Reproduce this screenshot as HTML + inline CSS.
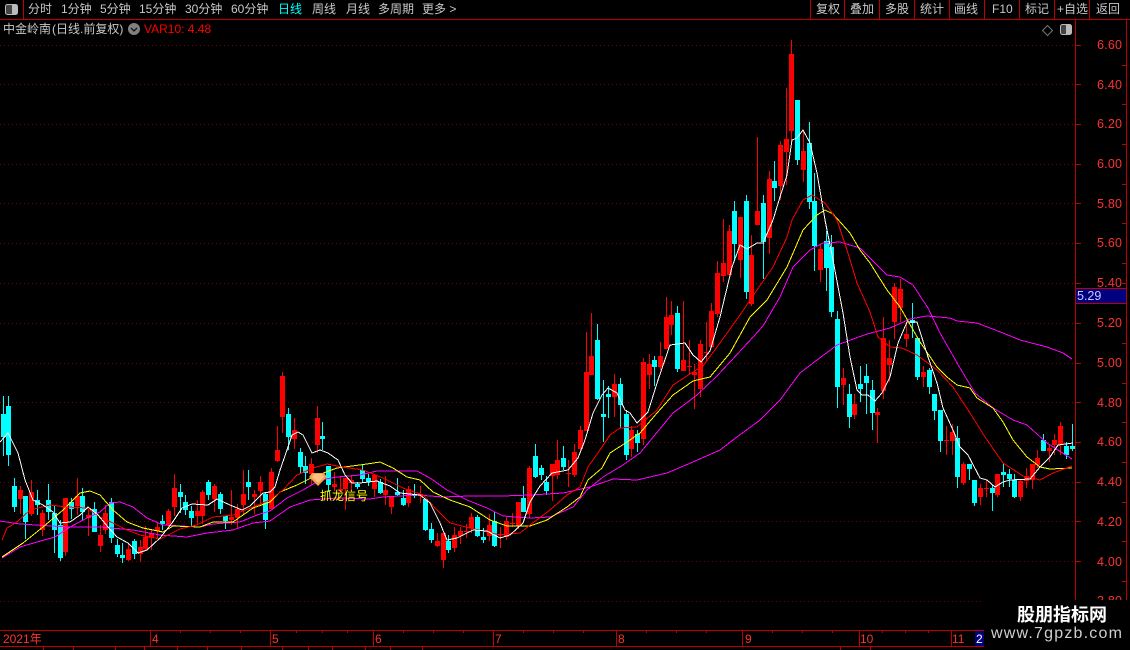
<!DOCTYPE html>
<html lang="zh"><head><meta charset="utf-8"><title>中金岭南</title>
<style>
html,body{margin:0;padding:0;background:#000;width:1130px;height:650px;overflow:hidden}
#p{position:relative;width:1130px;height:650px;background:#000;overflow:hidden;font:12px "WenQuanYi Zen Hei","Liberation Sans",sans-serif;color:#c8c8c8}
#p span{position:absolute;white-space:nowrap;line-height:14px}
.t{top:2px}
.a{left:1097px;color:#ff3232;font-family:"Liberation Sans",sans-serif;font-size:12.5px;letter-spacing:.2px}
.m{top:632px;color:#ff3232}
</style></head><body><div id="p">
<svg width="1130" height="650" style="position:absolute;left:0;top:0">
<g stroke="#7a0000" stroke-width="1" stroke-dasharray="1 3" shape-rendering="crispEdges">
<path d="M0 45.500H1073M0 84.500H1073M0 124.500H1073M0 164.500H1073M0 203.500H1073M0 243.500H1073M0 283.500H1073M0 323.500H1073M0 363.500H1073M0 402.500H1073M0 442.500H1073M0 482.500H1073M0 521.500H1073M0 561.500H1073M0 601.500H1073"/>
</g>
<g transform="translate(.5 0)" shape-rendering="crispEdges" fill="none">
<path stroke="#f00" stroke-width="1" d="M20 486V514M31 480V516M42 510V536M65 498V556M77 478V515M88 510V536M100 525V552M105 505V534M128 543V561M140 540V562M145 526V550M151 530V550M157 522V539M168 509V529M174 474V516M197 500V524M202 490V524M214 484V512M231 490V525M237 504V529M243 470V514M254 490V514M260 476V504M271 468V509M277 426V462M282 372V433M294 418V449M311 458V485M317 406V453M334 472V491M340 476V492M345 478V510M351 475V491M374 474V497M385 476V505M391 496V514M408 486V507M420 486V503M437 533V547M443 533V568M454 527V552M460 527V544M466 524V538M471 513V533M489 514V541M500 527V548M506 517V540M512 513V527M518 502V529M529 466V518M552 464V501M557 440V479M568 460V487M574 444V477M580 426V452M586 332V431M591 313V375M614 374V417M631 426V457M643 358V445M649 354V389M660 342V370M666 297V349M671 301V335M683 301V371M689 340V375M694 364V409M700 340V397M706 322V362M711 303V348M717 261V317M723 219V282M729 225V275M740 217V278M751 235V306M757 137V225M769 171V254M780 141V200M786 88V185M791 40V141M803 130V182M820 245V282M843 368V405M854 394V419M877 408V443M883 317V399M889 340V382M894 283V339M900 279V322M906 322V347M923 366V387M946 426V455M952 424V455M963 462V485M980 484V505M986 480V497M997 474V497M1020 479V501M1026 468V488M1032 464V489M1037 450V468M1049 445V462M1054 434V455M1060 422V455"/>
<path stroke="#f00" stroke-width="5" d="M20 490V499M31 492V514M42 513V530M65 498V552M77 496V506M88 515V518M100 535V546M105 513V530M128 549V560M140 547V554M145 537V549M151 533V538M157 527V531M168 511V525M174 488V507M197 511V516M202 492V516M214 486V499M231 517V520M237 509V518M243 494V505M254 494V497M260 482V491M271 472V509M277 450V461M282 376V417M294 430V439M311 464V474M317 418V445M334 484V487M340 489V491M345 478V489M351 480V483M374 475V489M385 490V495M391 496V507M408 489V503M420 494V496M437 541V546M443 533V560M454 535V548M460 531V536M466 531V532M471 517V528M489 525V536M500 534V535M506 521V537M512 523V524M518 502V526M529 468V514M552 464V476M557 460V475M568 473V474M574 452V475M580 430V449M586 372V431M591 356V375M614 384V397M631 430V449M643 362V439M649 364V375M660 356V367M666 317V349M671 315V325M683 360V371M689 366V367M694 372V375M700 344V389M706 352V353M711 311V347M717 273V314M723 263V276M729 231V275M740 217V260M751 255V304M757 211V225M769 179V238M780 145V186M786 139V152M791 54V131M803 151V170M820 249V270M843 378V385M854 404V415M877 412V415M883 338V391M889 358V365M894 287V322M900 289V308M906 334V339M923 372V377M946 440V441M952 432V441M963 464V483M980 488V497M986 488V489M997 474V495M1020 481V497M1026 476V481M1032 464V480M1037 458V465M1049 448V451M1054 440V445M1060 426V445"/>
<path stroke="#0ff" stroke-width="1" d="M3 396V456M8 396V466M14 478V512M25 496V539M37 490V515M48 484V520M54 506V553M60 520V561M71 498V519M82 488V521M94 502V532M111 498V543M117 539V557M122 543V563M134 539V559M162 515V530M180 484V513M185 495V515M191 506V526M208 480V500M220 492V514M225 516V529M248 470V500M265 492V529M288 408V450M300 448V474M305 456V484M322 422V450M328 466V492M357 482V489M362 464V483M368 474V486M380 479V494M397 478V496M403 490V506M414 484V498M425 499V531M431 523V543M448 535V553M477 515V537M483 528V543M494 512V547M523 486V512M535 444V478M541 465V480M546 476V495M563 446V470M597 324V400M603 380V442M608 386V418M620 378V428M626 410V460M637 430V452M654 356V386M677 306V372M734 201V261M746 195V299M763 195V279M774 161V201M797 100V165M809 122V209M814 173V271M826 231V291M831 235V317M837 311V408M849 384V428M860 366V402M866 364V414M872 380V430M912 303V338M917 338V380M929 368V394M934 394V420M940 410V452M957 426V488M969 464V480M974 480V506M992 485V511M1003 464V487M1009 469V487M1014 474V498M1043 434V451M1066 442V459M1072 424V451"/>
<path stroke="#0ff" stroke-width="5" d="M3 414V437M8 406V455M14 486V507M25 496V522M37 500V505M48 500V512M54 513V530M60 525V558M71 502V509M82 496V512M94 509V532M111 502V538M117 545V554M122 555V558M134 541V554M162 521V524M180 492V497M185 502V510M191 511V518M208 482V495M220 494V509M225 516V521M248 482V487M265 494V520M288 414V437M300 452V467M305 466V473M322 436V439M328 466V485M357 484V487M362 470V479M368 478V482M380 482V493M397 492V495M403 498V505M414 494V496M425 499V530M431 529V540M448 541V550M477 517V536M483 537V540M494 521V546M523 498V512M535 456V477M541 468V475M546 482V491M563 458V467M597 340V399M603 414V417M608 394V397M620 384V405M626 414V455M637 434V443M654 360V367M677 313V369M734 211V244M746 201V292M763 203V242M774 181V188M797 100V160M809 143V202M814 201V246M826 241V268M831 247V312M837 319V387M849 394V417M860 384V389M866 376V383M872 390V413M912 320V323M917 338V377M929 370V387M934 394V411M940 410V441M957 438V477M969 464V469M974 480V503M992 488V493M1003 472V475M1009 474V479M1014 480V497M1043 440V451M1066 446V455M1072 446V449"/>
</g>
<g fill="none" stroke-width="1" shape-rendering="crispEdges">
<polyline stroke="#f0f" points="0,521 20,524 67,527 100,527 133,530 160,535 187,537 207,533 233,530 253,523 270,521 290,507 310,500 337,498 370,499 383,497 417,495 443,497 470,496 503,496 530,495 563,493 590,487 613,479 637,480 667,473 693,462 720,450 733,440 760,420 780,400 800,373 817,360 837,345 867,334 890,328 910,319 927,316 950,318 957,321 977,323 1003,333 1020,340 1047,347 1063,353 1072,359"/>
<polyline stroke="#f0f" points="2,558 20,547 37,542 55,537 70,527 87,518 100,512 110,503 120,502 133,507 147,518 163,525 180,526 200,527 213,524 240,522 257,515 270,511 287,498 303,490 320,480 337,477 360,475 377,471 417,471 430,478 447,490 467,500 487,508 503,516 530,518 550,517 573,507 587,490 603,477 623,465 640,453 673,413 697,395 717,376 743,348 763,326 780,297 793,267 810,250 823,243 840,242 860,248 877,265 887,275 900,277 913,285 928,308 940,333 960,368 975,393 993,408 1013,420 1027,425 1047,443 1072,459"/>
<polyline stroke="#ff0" points="2,557 23,543 43,527 63,510 80,493 90,491 100,495 113,510 127,522 143,528 163,532 173,526 200,527 213,522 233,522 253,508 270,502 280,492 297,485 313,477 337,468 367,464 380,462 393,468 407,477 420,480 433,492 450,500 470,507 490,520 507,526 530,526 547,520 567,507 580,497 588,480 602,468 610,453 627,442 640,433 657,413 673,395 693,381 710,377 730,353 750,317 767,300 787,267 803,230 817,215 825,210 833,214 850,233 860,250 870,263 887,290 900,307 920,342 937,367 947,377 957,385 970,388 977,398 993,408 1003,422 1013,440 1027,457 1040,467 1050,469 1072,468"/>
<polyline stroke="#f00" points="2,540 7,528 17,522 30,510 50,505 67,507 87,508 100,517 113,523 127,530 140,535 160,539 180,529 197,525 213,517 233,515 253,507 270,500 283,490 297,475 313,468 327,464 342,467 363,470 383,478 403,488 423,495 437,510 450,523 470,528 500,535 520,533 530,525 550,510 567,495 580,487 588,467 600,450 610,435 620,428 637,427 657,410 673,385 690,374 703,366 720,343 740,315 757,290 773,267 787,237 792,220 803,200 812,195 825,203 837,220 847,250 857,283 870,312 878,337 890,347 902,348 917,355 937,370 953,387 970,413 985,437 1003,463 1023,476 1040,480 1053,473 1072,466"/>
<polyline stroke="#fff" points="0,442 8,433 18,453 25,480 33,500 43,505 53,512 60,523 70,522 80,515 88,507 98,515 108,527 117,537 128,543 138,553 147,550 160,538 172,523 182,508 192,504 208,505 217,499 230,505 242,510 250,506 263,493 270,492 275,487 280,470 287,450 292,435 298,432 303,435 312,453 320,450 328,453 338,460 345,475 352,483 360,483 377,481 390,486 400,493 420,495 430,503 440,523 447,540 457,538 473,530 487,531 500,538 510,535 523,523 530,502 540,486 552,473 568,470 578,458 585,440 593,413 602,395 608,388 617,393 625,410 630,413 637,423 648,412 658,380 670,345 685,343 693,355 701,362 710,351 720,317 732,267 740,245 747,249 757,243 763,243 773,220 780,197 787,175 792,140 797,138 803,130 810,143 817,173 825,220 833,260 843,313 850,357 857,390 862,395 868,395 875,401 882,393 890,377 898,343 907,322 917,322 928,357 937,383 943,408 953,430 960,447 968,455 980,478 987,480 995,487 1003,482 1010,480 1030,479 1040,467 1050,457 1058,445 1073,443"/>
</g>
<polygon points="312,473 324,473 327,477 318,486 309,477" fill="#f0a050"/>
<polygon points="314,474 322,474 324,477 318,483 312,477" fill="#ffc080"/>
<g stroke="#c00000" stroke-width="1" fill="none" shape-rendering="crispEdges">
<path d="M0 19.500H1130M23.500 0V19M810.500 0V19M844.500 0V19M879.500 0V19M914.500 0V19M949.500 0V19M984.500 0V19M1019.500 0V19M1054.500 0V19M1089.500 0V19"/>
<path d="M1075.500 19V630M1126.500 19V630"/>
<path d="M1075 45.500h6M1075 84.500h6M1075 124.500h6M1075 164.500h6M1075 203.500h6M1075 243.500h6M1075 283.500h6M1075 323.500h6M1075 363.500h6M1075 402.500h6M1075 442.500h6M1075 482.500h6M1075 521.500h6M1075 561.500h6"/>
<path d="M1122 65.500h4M1122 104.500h4M1122 144.500h4M1122 184.500h4M1122 223.500h4M1122 263.500h4M1122 283.500h4M1122 343.500h4M1122 383.500h4M1122 422.500h4M1122 462.500h4M1122 502.500h4M1122 541.500h4M1122 581.500h4"/>
<path d="M0 630.500H1130M0 646.500H1130"/>
<path d="M150.500 630V646M270.500 630V646M373.500 630V646M493.500 630V646M616.500 630V646M742.500 630V646M859.500 630V646M951.500 630V646"/>
<path d="M180.500 630v3M210.500 630v3M240.500 630v3M296.500 630v3M322.500 630v3M347.500 630v3M403.500 630v3M433.500 630v3M463.500 630v3M523.500 630v3M553.500 630v3M583.500 630v3M646.500 630v3M676.500 630v3M706.500 630v3M772.500 630v3M802.500 630v3M832.500 630v3M882.500 630v3M905.500 630v3M928.500 630v3"/>
<path d="M43.500 647V650M73.500 647V650M115.500 647V650M144.500 647V650M177.500 647V650M207.500 647V650M241.500 647V650M282.500 647V650M308.500 647V650M332.500 647V650M365.500 647V650M390.500 647V650M422.500 647V650M840.500 647V650M870.500 647V650"/>
</g>
<rect x="1075.500" y="288.500" width="51" height="15" fill="#000080" stroke="#c00000"/>
<rect x="975" y="631" width="9" height="15" fill="#000080"/>
<rect x="5.500" y="4.500" width="12" height="10" rx="2" fill="#444" stroke="#bbb"/>
<rect x="12" y="5" width="5" height="9" fill="#bbb"/>
<circle cx="134" cy="29" r="6" fill="#808080"/>
<path d="M131 28l3 3 3-3" fill="none" stroke="#111" stroke-width="1.300"/>
<path d="M1047.500 25.500l5 5-5 5-5-5z" fill="none" stroke="#777"/>
<rect x="1060.500" y="24.500" width="11" height="10" rx="2" fill="#444" stroke="#bbb"/>
<rect x="1066" y="25" width="5" height="9" fill="#bbb"/>
</svg>
<span class="t" style="left:28px">分时</span>
<span class="t" style="left:61px">1分钟</span>
<span class="t" style="left:100px">5分钟</span>
<span class="t" style="left:139px">15分钟</span>
<span class="t" style="left:185px">30分钟</span>
<span class="t" style="left:231px">60分钟</span>
<span class="t" style="left:278px;color:#00ffff">日线</span>
<span class="t" style="left:312px">周线</span>
<span class="t" style="left:346px">月线</span>
<span class="t" style="left:378px">多周期</span>
<span class="t" style="left:422px">更多 &gt;</span>
<span class="t" style="left:816px">复权</span>
<span class="t" style="left:850px">叠加</span>
<span class="t" style="left:885px">多股</span>
<span class="t" style="left:920px">统计</span>
<span class="t" style="left:954px">画线</span>
<span class="t" style="left:992px">F10</span>
<span class="t" style="left:1025px">标记</span>
<span class="t" style="left:1057px">+自选</span>
<span class="t" style="left:1096px">返回</span>
<span style="left:3px;top:22px">中金岭南</span>
<span style="left:52px;top:22px">(日线.前复权)</span>
<span style="left:144px;top:22px;color:#ff0000">VAR10: 4.48</span>
<span style="left:320px;top:489px;color:#ffff00">抓龙信号</span>
<span class="a" style="top:38px">6.60</span>
<span class="a" style="top:78px">6.40</span>
<span class="a" style="top:117px">6.20</span>
<span class="a" style="top:157px">6.00</span>
<span class="a" style="top:197px">5.80</span>
<span class="a" style="top:236px">5.60</span>
<span class="a" style="top:276px">5.40</span>
<span class="a" style="top:316px">5.20</span>
<span class="a" style="top:356px">5.00</span>
<span class="a" style="top:396px">4.80</span>
<span class="a" style="top:435px">4.60</span>
<span class="a" style="top:475px">4.40</span>
<span class="a" style="top:515px">4.20</span>
<span class="a" style="top:555px">4.00</span>
<span class="a" style="top:594px">3.80</span>
<span style="left:1077px;top:289px;color:#c8c8ff;font-family:'Liberation Sans',sans-serif;font-size:12.500px">5.29</span>
<span class="m" style="left:3px">2021年</span>
<span class="m" style="left:152px">4</span>
<span class="m" style="left:272px">5</span>
<span class="m" style="left:375px">6</span>
<span class="m" style="left:495px">7</span>
<span class="m" style="left:618px">8</span>
<span class="m" style="left:745px">9</span>
<span class="m" style="left:860px">10</span>
<span class="m" style="left:952px">11</span>
<span class="m" style="left:976px;color:#fff">2</span>
<div style="position:absolute;left:984px;top:600px;width:146px;height:50px;background:#000"></div>
<span style="left:1017px;top:603px;color:#fff;font:bold 18px/22px 'Noto Sans CJK SC',sans-serif">股朋指标网</span>
<span style="left:991px;top:625px;line-height:18px;color:#d0d0d0;font-family:'Liberation Sans',sans-serif;font-size:16px;letter-spacing:1.2px">www.7gpzb.com</span>
</div></body></html>
